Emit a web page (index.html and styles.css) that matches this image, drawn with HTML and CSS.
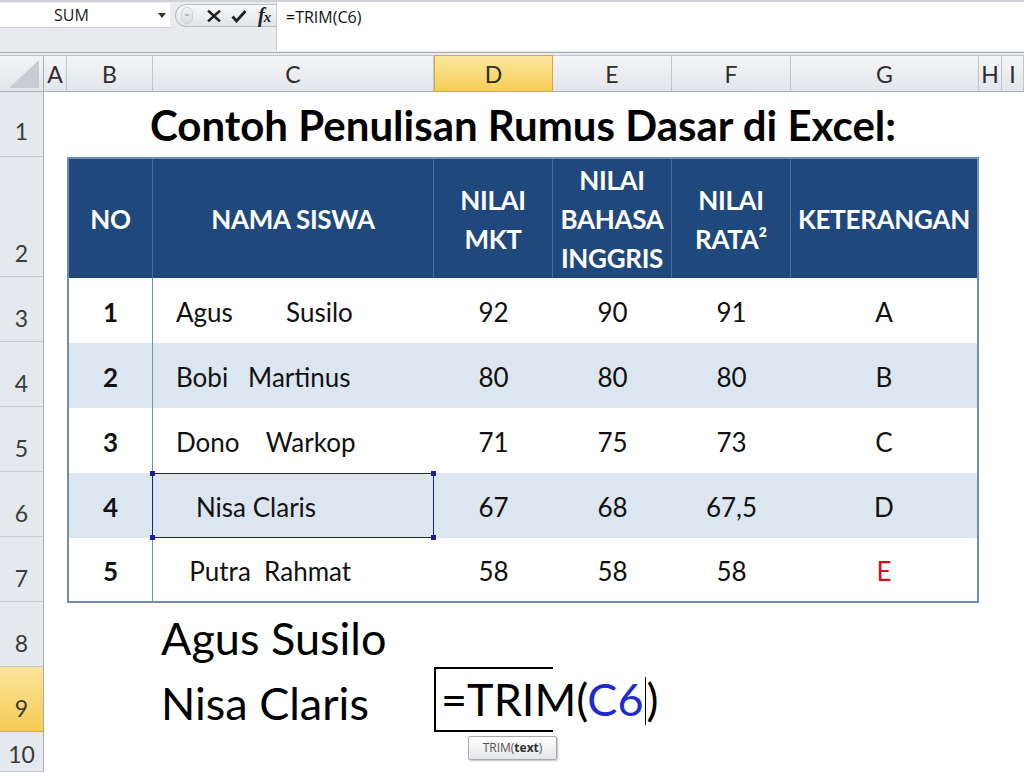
FILE: index.html
```html
<!DOCTYPE html>
<html>
<head>
<meta charset="utf-8">
<title>Excel TRIM</title>
<link rel="stylesheet" href="styles.css">
</head>
<body>
<div class="fbar">
  <div class="nb-col">
    <div class="namebox"><span class="nb-text">SUM</span><span class="nb-arrow"></span></div>
  </div>
  <div class="fx-col">
    <div class="pill">
      <span class="grip"></span>
      <svg class="ico" width="14" height="14" viewBox="0 0 14 14"><path d="M2 2.5 L12 11.5 M12 2.5 L2 11.5" stroke="#222" stroke-width="2.6" stroke-linecap="square"/></svg>
      <svg class="ico" width="16" height="14" viewBox="0 0 16 14"><path d="M1.5 7.5 L5.5 12 L14.5 2" stroke="#222" stroke-width="2.8" fill="none" stroke-linejoin="miter"/></svg>
      <span class="fx">f<span class="fx-x">x</span></span>
    </div>
  </div>
  <div class="finput">=TRIM(C6)</div>
</div>
<div class="fgap"></div>
<div class="sheet">
  <div class="corner"><span class="corner-tri"></span></div>
  <div class="ch">A</div>
  <div class="ch">B</div>
  <div class="ch">C</div>
  <div class="ch ch-on">D</div>
  <div class="ch">E</div>
  <div class="ch">F</div>
  <div class="ch">G</div>
  <div class="ch">H</div>
  <div class="ch">I</div>

  <div class="rh r1">1</div>
  <div class="rh r2">2</div>
  <div class="rh r3">3</div>
  <div class="rh r4">4</div>
  <div class="rh r5">5</div>
  <div class="rh r6">6</div>
  <div class="rh r7">7</div>
  <div class="rh r8">8</div>
  <div class="rh r9 rh-on">9</div>
  <div class="rh r10">10</div>

  <div class="title">Contoh Penulisan Rumus Dasar di Excel:</div>

  <div class="tbl-wrap">
    <table class="tbl">
      <colgroup>
        <col class="c-no"><col class="c-nama"><col class="c-n"><col class="c-n"><col class="c-n"><col class="c-ket">
      </colgroup>
      <thead>
        <tr>
          <th>NO</th>
          <th>NAMA SISWA</th>
          <th>NILAI<br>MKT</th>
          <th>NILAI<br>BAHASA<br>INGGRIS</th>
          <th>NILAI<br>RATA²</th>
          <th>KETERANGAN</th>
        </tr>
      </thead>
      <tbody>
        <tr><td class="no">1</td><td class="nm">Agus        Susilo</td><td>92</td><td>90</td><td>91</td><td>A</td></tr>
        <tr><td class="no">2</td><td class="nm">Bobi   Martinus</td><td>80</td><td>80</td><td>80</td><td>B</td></tr>
        <tr><td class="no">3</td><td class="nm">Dono    Warkop</td><td>71</td><td>75</td><td>73</td><td>C</td></tr>
        <tr><td class="no">4</td><td class="nm sel">   Nisa Claris<span class="selbox"><i class="h tl"></i><i class="h tr"></i><i class="h bl"></i><i class="h br"></i></span></td><td>67</td><td>68</td><td>67,5</td><td>D</td></tr>
        <tr class="last"><td class="no">5</td><td class="nm">  Putra  Rahmat</td><td>58</td><td>58</td><td>58</td><td class="red">E</td></tr>
      </tbody>
    </table>
  </div>

  <div class="big c8">Agus Susilo</div>
  <div class="big c9">Nisa Claris</div>
  <div class="edit">=TRIM(<span class="ref">C6</span><span class="caret"></span>)<span class="tip">TRIM(<b>text</b>)</span></div>
</div>
</body>
</html>
```
FILE: styles.css
```css
* { box-sizing: border-box; margin: 0; padding: 0; }
html, body { width: 1024px; height: 773px; overflow: hidden; background: #fff; }
body { font-family: Lato, "Liberation Sans", sans-serif; color: #111; }

/* formula bar */
.fbar {
  height: 53px;
  padding-top: 3px;
  display: flex;
  background: #e9ebee;
  border-top: 2px solid #cfd3d8;
  border-bottom: 1px solid #a9aeb4;
}
.nb-col { width: 170px; }
.namebox {
  height: 25px;
  margin-top: -2px;
  background: #fff;
  display: flex;
  align-items: center;
  position: relative;
  border-bottom: 1px solid #c9ccd0;
}
.nb-text { font-family: "Open Sans", sans-serif; font-size: 16px; color: #222; margin-left: 54px; }
.nb-arrow {
  position: absolute; left: 158px; top: 10px;
  border-left: 4px solid transparent; border-right: 4px solid transparent;
  border-top: 5px solid #333;
}
.fx-col { width: 106px; padding-left: 5px; }
.pill {
  height: 23px;
  margin-top: -1px;
  border: 1px solid #b9bec4;
  border-right: none;
  border-radius: 12px 0 0 12px;
  background: linear-gradient(#f7f8f9, #e1e4e8);
  display: flex;
  align-items: center;
  padding-left: 5px;
  gap: 10px;
}
.grip {
  width: 12px; height: 17px; border-radius: 6px;
  background: linear-gradient(#f2f3f5, #d9dce0);
  border: 1px solid #cfd2d6;
  margin-right: 4px;
  position: relative;
}
.grip::after { content: ""; position: absolute; left: 3px; top: 6px; width: 4px; height: 2px; background: #b7bbc0; }
.ico { display: block; }
.fx { font-family: "Liberation Serif", serif; font-style: italic; font-size: 20px; color: #222; font-weight: bold; letter-spacing: -1px; margin-left: 1px; }
.fx-x { font-size: 15px; }
.finput {
  flex: 1;
  height: 49px;
  margin-top: -3px;
  background: #fff;
  border-left: 1px solid #c8ccd1;
  font-family: "Open Sans", sans-serif;
  font-size: 16px;
  color: #111;
  padding: 4px 0 0 9px;
}
.fgap { height: 2px; background: #e9ebee; }

/* sheet */
.sheet {
  display: grid;
  grid-template-columns: 44px 23px 86px 281px 119px 119px 119px 188px 23px 1fr;
  grid-template-rows: 37px 65px 120px repeat(7, 65px) 40px;
  height: 717px;
}
.corner {
  background: linear-gradient(#f3f4f6, #e2e5e9);
  border-right: 1px solid #a9aeb4;
  border-bottom: 1px solid #a9aeb4;
  border-top: 1px solid #c2c6cb;
  position: relative;
}
.corner-tri {
  position: absolute; right: 4px; bottom: 3px;
  border-left: 30px solid transparent;
  border-bottom: 28px solid #c9ccd0;
}
.ch {
  background: linear-gradient(#f4f5f7, #e2e5ea);
  border-right: 1px solid #c3c7cc;
  border-top: 1px solid #c2c6cb;
  border-bottom: 1px solid #a9aeb4;
  display: flex; align-items: center; justify-content: center;
  font-size: 23px; color: #2d2d2d;
}
.ch-on {
  background: linear-gradient(#fbe7a0, #f6cd55);
  border: 1px solid #d7a93b;
}
.rh {
  grid-column: 1;
  background: #e5e8ec;
  border-right: 1px solid #a9aeb4;
  border-bottom: 1px solid #c5c9ce;
  display: flex; align-items: flex-end; justify-content: center;
  padding-bottom: 10px;
  font-size: 23px; line-height: 26px; color: #3a3a3a;
}
.rh-on { background: linear-gradient(#fbe49a, #f5cb55); border-bottom-color: #d7a93b; }
.r1 { grid-row: 2; padding-bottom: 12px; } .r2 { grid-row: 3; } .r3 { grid-row: 4; } .r4 { grid-row: 5; }
.r5 { grid-row: 6; } .r6 { grid-row: 7; } .r7 { grid-row: 8; } .r8 { grid-row: 9; }
.r9 { grid-row: 10; } .r10 { grid-row: 11; padding-bottom: 4px; }

.title {
  grid-column: 3 / 9; grid-row: 2;
  text-align: center;
  font-weight: bold; font-size: 42px;
  align-self: end;
  padding-bottom: 10px;
  line-height: 44px;
  color: #000;
}

.tbl-wrap { grid-column: 3 / 9; grid-row: 3 / 9; }
.tbl {
  width: 100%; height: 100%;
  border-collapse: separate; border-spacing: 0;
  table-layout: fixed;
  border: 2px solid #6f8fae;
}
.c-no { width: 84px; } .c-nama { width: 281px; } .c-n { width: 119px; } .c-ket { width: 186px; }
.tbl thead tr { height: 118px; }
.tbl th {
  background: #1f497d; color: #fff;
  font-weight: bold; font-size: 26px; line-height: 39px;
  text-align: center; vertical-align: middle;
  border-right: 1px solid #4c6d98;
  padding-top: 2px;
  letter-spacing: -0.3px;
}
.tbl th:last-child { border-right: none; }
.tbl tbody tr { height: 65px; }
.tbl tbody tr.last { height: 63px; }
.tbl tbody tr:nth-child(even) td { background: #dce6f1; }
.tbl td {
  font-size: 26px; text-align: center; vertical-align: middle;
  color: #111; padding-top: 2px;
}
.tbl td.no { font-weight: bold; border-right: 1px solid #7593b1; }
.tbl td.nm { text-align: left; white-space: pre; padding-left: 23px; }
.tbl td.red { color: #d0101a; }
.sel { position: relative; }
.selbox { position: absolute; inset: 0 0 0 -1px; border: 1px solid #1d1d9f; }
.h { position: absolute; width: 5px; height: 5px; background: #1d1d9f; }
.tl { left: -3px; top: -3px; } .tr { right: -3px; top: -3px; }
.bl { left: -3px; bottom: -3px; } .br { right: -3px; bottom: -3px; }

.big {
  grid-column: 4; font-size: 45px; line-height: 52px;
  padding-left: 8px; align-self: center; white-space: nowrap; color: #000;
  padding-top: 6px;
}
.c8 { grid-row: 9; }
.c9 { grid-row: 10; }
.edit {
  grid-column: 5; grid-row: 10;
  position: relative;
  border: 2px solid #000; border-right: none;
  font-size: 45px; line-height: 58px; white-space: nowrap;
  padding-left: 5px; padding-top: 1px; color: #000;
}
.ref { color: #1f2ad0; }
.caret { display: inline-block; width: 1px; height: 48px; background: #000; vertical-align: -9px; margin: 0 1px; }
.tip {
  position: absolute; left: 32px; top: 67px;
  width: 89px; height: 24px;
  border: 1px solid #a5a8ac; border-radius: 2px;
  background: linear-gradient(#ffffff, #e5e6e8);
  box-shadow: 1px 1px 2px rgba(0,0,0,.25);
  font-size: 12px; line-height: 22px; color: #555; text-align: center;
  font-family: "Open Sans", sans-serif;
}
.tip b { color: #333; }
```
